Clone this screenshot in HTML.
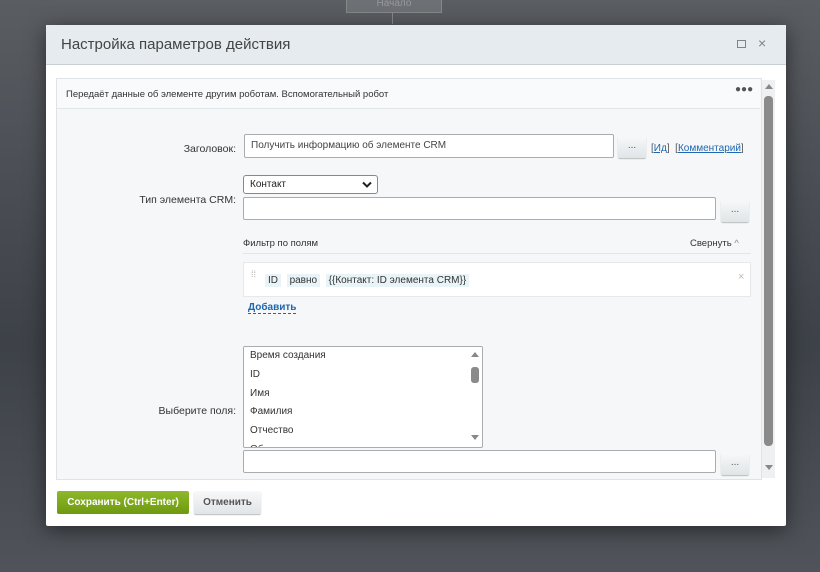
<!DOCTYPE html><html><head><meta charset="utf-8"><style>
body{margin:0;width:820px;height:572px;background:linear-gradient(#5a5d62,#3d4148 60%,#50545a);font-family:"Liberation Sans",sans-serif;position:relative;overflow:hidden}
.a{position:absolute}
.t{font-size:10px;color:#333}
.lbl{position:absolute;right:584px;font-size:10.5px;color:#333;text-align:right}
.ta{background:#fff;border:1px solid #a8adb2;border-radius:2px;box-sizing:border-box}
.btn{background:linear-gradient(#f7f8f9,#e1e5e8);border-radius:2px;box-shadow:0 1px 1px #bbb;font-size:10px;color:#555;text-align:center}
.chip{background:#e8f4f8;padding:1px 3px}
</style></head><body>
<div class="a" style="left:346px;top:-3px;width:94px;height:14px;background:#6d7075;border:1px solid #888;color:#999;font-size:10px;text-align:center">Начало</div>
<div class="a" style="left:392px;top:12px;width:1px;height:12px;background:#888"></div>
<div class="a" style="left:46px;top:25px;width:740px;height:501px;background:#fff;box-shadow:0 4px 20px rgba(0,0,0,.5);border-radius:2px"></div>
<div class="a" style="left:46px;top:25px;width:740px;height:39px;background:#e5ebee;border-bottom:1px solid #c8d0d4"></div>
<div class="a" style="left:61px;top:36px;font-size:15px;color:#444">Настройка параметров действия</div>
<div class="a" style="left:737px;top:40px;width:7px;height:6px;border:1px solid #7a8590"></div>
<div class="a" style="left:758px;top:35px;font-size:14px;color:#7a8590">×</div>
<div class="a" style="left:56px;top:78px;width:704px;height:400px;background:#f5f7f8;border:1px solid #dde3e6"></div>
<div class="a" style="left:57px;top:79px;width:703px;height:29px;border-bottom:1px solid #e1e6e9;background:#f9fafb"></div>
<div class="a t" style="left:66px;top:89px;font-size:9.5px">Передаёт данные об элементе другим роботам. Вспомогательный робот</div>
<div class="a" style="left:735px;top:84px;font-size:10px;color:#555;letter-spacing:0px">●●●</div>
<div class="a" style="left:762px;top:80px;width:13px;height:398px;background:#eef0f1"></div>
<div class="a" style="left:764px;top:96px;width:9px;height:350px;background:#8a8a8a;border-radius:4px"></div>
<div class="a" style="left:765px;top:84px;width:0;height:0;border:4px solid transparent;border-bottom:5px solid #888;border-top:0"></div>
<div class="a" style="left:765px;top:465px;width:0;height:0;border:4px solid transparent;border-top:5px solid #888;border-bottom:0"></div>

<div class="lbl" style="top:143px">Заголовок:</div>
<div class="a ta" style="left:244px;top:134px;width:370px;height:24px;padding:5px 6px;font-size:10px;color:#444">Получить информацию об элементе CRM</div>
<div class="a btn" style="left:618px;top:136px;width:28px;height:22px;line-height:20px">...</div>
<div class="a t" style="left:651px;top:143px;color:#555">[<u style="color:#2067b0">Ид</u>]&nbsp; [<u style="color:#2067b0">Комментарий</u>]</div>

<div class="lbl" style="top:194px">Тип элемента CRM:</div>
<div class="a" style="left:243px;top:175px;width:135px;height:19px;border:1px solid #888;border-radius:3px;background:#fff;box-sizing:border-box;font-size:10px;padding:3px 6px;color:#222">Контакт<svg style="position:absolute;right:5px;top:5px" width="10" height="7" viewBox="0 0 10 7"><path d="M1 1.5L5 5.5L9 1.5" fill="none" stroke="#222" stroke-width="2"/></svg></div>
<div class="a ta" style="left:243px;top:197px;width:473px;height:23px"></div>
<div class="a btn" style="left:721px;top:200px;width:28px;height:22px;line-height:20px">...</div>

<div class="a t" style="left:243px;top:238px;font-size:9.5px">Фильтр по полям</div>
<div class="a t" style="left:690px;top:238px;font-size:9.5px">Свернуть <span style="color:#888">^</span></div>
<div class="a" style="left:243px;top:253px;width:508px;height:1px;background:#e1e6e9"></div>
<div class="a" style="left:243px;top:262px;width:508px;height:35px;background:#fff;border:1px solid #e5e9eb;box-sizing:border-box"></div>
<div class="a" style="left:251px;top:272px;font-size:9px;color:#aaa;line-height:5px">⁞⁞</div>
<div class="a t" style="left:265px;top:275px;color:#333"><span class="chip">ID</span> &nbsp;<span class="chip">равно</span> &nbsp;<span class="chip">{{Контакт: ID элемента CRM}}</span></div>
<div class="a" style="left:738px;top:271px;font-size:11px;color:#bbb">×</div>
<div class="a" style="left:248px;top:302px;font-size:10px;color:#2067b0;font-weight:bold;border-bottom:1px dashed #2067b0">Добавить</div>

<div class="lbl" style="top:405px">Выберите поля:</div>
<div class="a" style="left:243px;top:346px;width:240px;height:102px;background:#fff;border:1px solid #a8adb2;box-sizing:border-box;overflow:hidden;border-radius:2px">
<div style="font-size:10px;color:#333;line-height:18.8px;padding-left:6px;margin-top:0">Время создания<br>ID<br>Имя<br>Фамилия<br>Отчество<br>Об</div>
<div class="a" style="left:227px;top:20px;width:8px;height:16px;background:#8a8a8a;border-radius:3px"></div>
<div class="a" style="left:227px;top:5px;border:4px solid transparent;border-bottom:5px solid #888;border-top:0"></div>
<div class="a" style="left:227px;top:88px;border:4px solid transparent;border-top:5px solid #888;border-bottom:0"></div>
</div>
<div class="a ta" style="left:243px;top:450px;width:473px;height:23px"></div>
<div class="a btn" style="left:721px;top:453px;width:28px;height:22px;line-height:20px">...</div>

<div class="a" style="left:57px;top:491px;width:132px;height:23px;background:linear-gradient(#8fb82a,#6e9a10);border-radius:2px;color:#fff;font-size:10px;font-weight:bold;text-align:center;line-height:23px">Сохранить (Ctrl+Enter)</div>
<div class="a btn" style="left:194px;top:491px;width:67px;height:23px;line-height:23px;font-weight:bold">Отменить</div>
</body></html>
